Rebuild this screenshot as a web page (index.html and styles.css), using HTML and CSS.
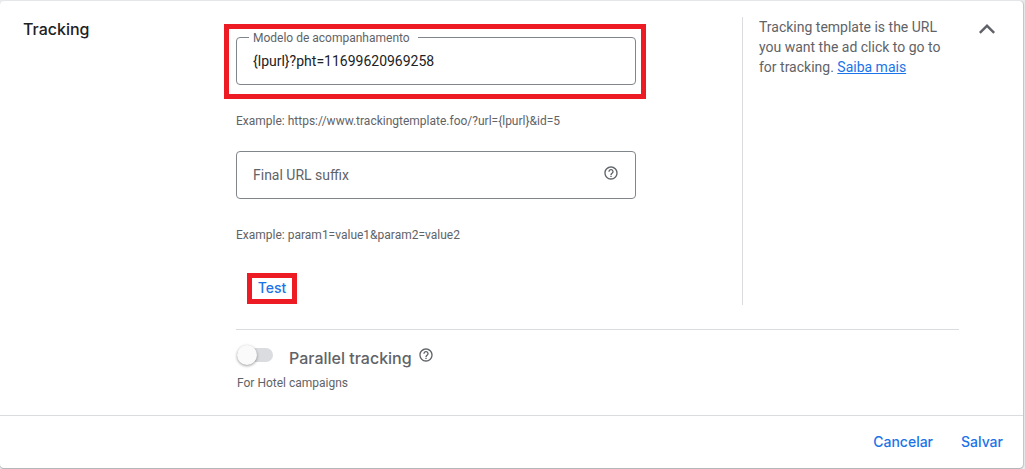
FILE: index.html
```html
<!DOCTYPE html>
<html lang="pt-BR">
<head>
  <meta charset="UTF-8">
  <title>Tracking</title>
  <link rel="stylesheet" href="styles.css">
</head>
<body>

<form class="card">
  <div class="panel">
    <h2 class="title">Tracking</h2>

    <div class="content">
      <div class="settings">
        <div class="fields">
          <div class="highlight">
            <div class="field">
              <label for="template" class="floating">Modelo de acompanhamento</label>
              <input type="text" id="template" value="{lpurl}?pht=11699620969258">
            </div>
          </div>
          <p class="hint">Example: https://www.trackingtemplate.foo/?url={lpurl}&amp;id=5</p>

          <div class="field">
            <input type="text" id="suffix" placeholder="Final URL suffix" aria-label="Final URL suffix">
            <svg class="help" viewBox="0 0 24 24"><path d="M11 18h2v-2h-2v2zm1-16C6.48 2 2 6.48 2 12s4.48 10 10 10 10-4.48 10-10S17.52 2 12 2zm0 18c-4.41 0-8-3.59-8-8s3.59-8 8-8 8 3.59 8 8-3.59 8-8 8zm0-14c-2.21 0-4 1.79-4 4h2c0-1.1.9-2 2-2s2 .9 2 2c0 2-3 1.75-3 5h2c0-2.25 3-2.5 3-5 0-2.21-1.79-4-4-4z"/></svg>
          </div>
          <p class="hint">Example: param1=value1&amp;param2=value2</p>

          <button type="button" class="test">Test</button>
        </div>

        <aside class="info">
          Tracking template is the URL you want the ad click to go to for tracking. <a href="#">Saiba mais</a>
        </aside>
      </div>

      <div class="parallel">
        <div class="parallel-row">
          <input type="checkbox" id="parallel" class="switch">
          <label for="parallel">Parallel tracking</label>
          <svg class="help" viewBox="0 0 24 24"><path d="M11 18h2v-2h-2v2zm1-16C6.48 2 2 6.48 2 12s4.48 10 10 10 10-4.48 10-10S17.52 2 12 2zm0 18c-4.41 0-8-3.59-8-8s3.59-8 8-8 8 3.59 8 8-3.59 8-8 8zm0-14c-2.21 0-4 1.79-4 4h2c0-1.1.9-2 2-2s2 .9 2 2c0 2-3 1.75-3 5h2c0-2.25 3-2.5 3-5 0-2.21-1.79-4-4-4z"/></svg>
        </div>
        <p class="note">For Hotel campaigns</p>
      </div>
    </div>

    <button type="button" class="collapse" aria-label="Collapse">
      <svg viewBox="0 0 28 24"><path d="M14 7l-8 8 1.7 1.7 6.3-6.3 6.3 6.3L22 15z"/></svg>
    </button>
  </div>

  <div class="actions">
    <button type="button">Cancelar</button>
    <button type="submit">Salvar</button>
  </div>
</form>

</body>
</html>
```
FILE: styles.css
```css
* {
  box-sizing: border-box;
}

body {
  margin: 0;
  padding: 1px 2px 1px 0;
  font-family: Roboto, "Liberation Sans", sans-serif;
  font-size: 14px;
  line-height: 20px;
  background: #e8eaeb;
  color: #5f6368;
}

button {
  padding: 0;
  border: none;
  background: none;
  font: 500 14px/20px Inter, Roboto, sans-serif;
  color: #1a73e8;
  cursor: pointer;
}

p {
  margin: 0;
}

svg {
  display: block;
  fill: #5f6368;
}

.card {
  background: #fff;
  border-radius: 4px;
  box-shadow: 0 1px 1px #aeb1b3, 1px 0 1px #c4c7c9;
}

.panel {
  display: grid;
  grid-template-columns: 236px 1fr 64px;
  padding: 16px 0 24px;
}

.title {
  margin: 2px 0 0 23px;
  font: 500 16px/20px Inter, Roboto, sans-serif;
  color: #202124;
}

.settings {
  display: flex;
  height: 288px;
}

.fields {
  flex: 1;
  padding-top: 7px;
}

.field {
  position: relative;
  display: flex;
  align-items: center;
  width: 400px;
  height: 48px;
  padding: 0 16px;
  border: 1px solid #80868b;
  border-radius: 4px;
}

.field input {
  flex: 1;
  padding: 0;
  border: none;
  outline: none;
  background: none;
  font: inherit;
  color: #202124;
}

.field input::placeholder {
  color: #5f6368;
  opacity: 1;
}

.floating {
  position: absolute;
  top: -8px;
  left: 12px;
  padding: 0 8px 0 4px;
  background: #fff;
  font-size: 12px;
  line-height: 16px;
}

/* red call-out boxes */
.highlight,
.test {
  border: 5px solid #ed1c24;
}

.highlight {
  width: 422px;
  margin-left: -12px;
  padding: 8px 5px 9px 7px;
}

.hint {
  margin: 14px 0 22px;
  font-size: 12px;
  line-height: 16px;
}

.field + .hint {
  margin: 28px 0 30px;
}

.help {
  width: 16px;
  height: 16px;
  margin-bottom: 4px;
}

.test {
  display: block;
  width: 50px;
  height: 31px;
  margin-left: 11px;
  padding-bottom: 2px;
  line-height: 16px;
}

.info {
  width: 217px;
  padding-left: 16px;
  border-left: 1px solid #dadce0;
}

.info a {
  color: #1a73e8;
}

.parallel {
  margin-top: 24px;
  padding-top: 16px;
  border-top: 1px solid #dadce0;
}

.parallel-row {
  display: flex;
  align-items: center;
}

.parallel-row label {
  margin: 2px 6px 0 16px;
  font: 500 16px/20px Inter, Roboto, sans-serif;
}

.switch {
  appearance: none;
  position: relative;
  width: 36px;
  height: 14px;
  margin: 0 0 4px 1px;
  border-radius: 7px;
  background: #dadce0;
}

.switch::before {
  content: "";
  position: absolute;
  top: -3px;
  left: 0;
  width: 20px;
  height: 20px;
  border-radius: 50%;
  background: #fafafa;
  box-shadow: 0 1px 3px rgba(0, 0, 0, 0.4);
}

.switch:checked::before {
  left: 16px;
  background: #1a73e8;
}

.note {
  margin: 7px 0 0 1px;
  font-size: 12px;
  line-height: 16px;
}

.collapse {
  align-self: start;
  margin-left: 14px;
}

.collapse svg {
  width: 28px;
  height: 24px;
}

.actions {
  display: flex;
  justify-content: flex-end;
  align-items: center;
  gap: 28px;
  height: 53px;
  padding-right: 20px;
  border-top: 1px solid #dadce0;
}
```
